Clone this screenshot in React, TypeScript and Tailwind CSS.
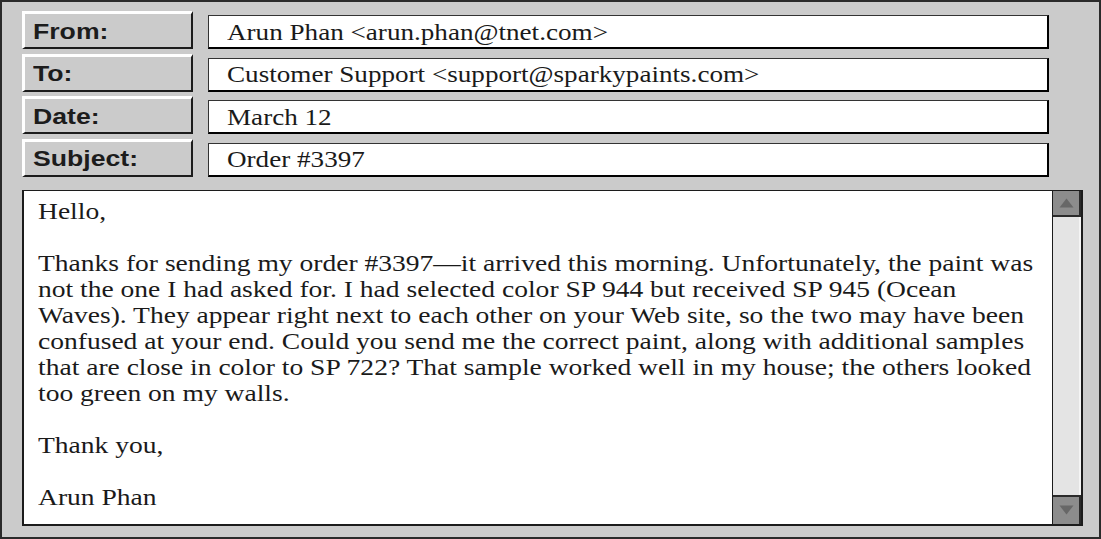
import React from "react";

const rows = [
  { label: "From:", value: "Arun Phan <arun.phan@tnet.com>" },
  { label: "To:", value: "Customer Support <support@sparkypaints.com>" },
  { label: "Date:", value: "March 12" },
  { label: "Subject:", value: "Order #3397" },
];

const body: string[] = [
  "Hello,",
  "",
  "Thanks for sending my order #3397\u2014it arrived this morning. Unfortunately, the paint was",
  "not the one I had asked for. I had selected color SP 944 but received SP 945 (Ocean",
  "Waves). They appear right next to each other on your Web site, so the two may have been",
  "confused at your end. Could you send me the correct paint, along with additional samples",
  "that are close in color to SP 722? That sample worked well in my house; the others looked",
  "too green on my walls.",
  "",
  "Thank you,",
  "",
  "Arun Phan",
];

export default function App() {
  return (
    <div className="w-[1101px] h-[539px] bg-[#cbcbcb] border-2 border-[#2a2a2a] box-border flex flex-col pl-[20px] pr-[15px] pt-[9px]">
      <div className="flex flex-col gap-[4.5px]">
        {rows.map((r) => (
          <div key={r.label} className="flex items-end h-[38px]">
            <div
              className="w-[171px] h-[38px] box-border border-t-[3px] border-l-[3px] border-b-2 border-r-2 border-t-white border-l-white border-b-[#1c1c1c] border-r-[#1c1c1c] bg-[#cbcbcb] flex items-center pl-[8px] text-[22px] font-bold text-[#1c1c1c]"
              style={{ fontFamily: '"Liberation Sans", Arial, sans-serif' }}
            >
              <span className="inline-block origin-left scale-x-[1.21] pt-[1px]">{r.label}</span>
            </div>
            <div
              className="ml-[15px] w-[841px] h-[34px] box-border border-t border-l border-t-[#333] border-l-[#333] border-b-2 border-r-2 border-b-black border-r-black bg-white flex items-center pl-[18px] text-[24px] leading-[28px] text-[#1a1a1a] whitespace-nowrap"
              style={{ fontFamily: '"Liberation Serif", "Times New Roman", serif' }}
            >
              <span className="inline-block origin-left scale-x-[1.13]">{r.value}</span>
            </div>
          </div>
        ))}
      </div>
      <div className="mt-[13px] flex w-[1061px] h-[336px] box-border border-2 border-t border-[#1c1c1c] bg-white">
        <div
          className="flex-1 pl-[14px] pt-[7px] text-[24px] leading-[26px] text-[#1a1a1a]"
          style={{ fontFamily: '"Liberation Serif", "Times New Roman", serif' }}
        >
          {body.map((l, i) => (
            <div key={i} className="h-[26px] whitespace-nowrap">
              <span className="inline-block origin-left scale-x-[1.147]">{l}</span>
            </div>
          ))}
        </div>
        <div className="w-[29px] flex flex-col border-l border-[#1c1c1c] bg-[#e4e4e4]">
          <div className="h-[26px] bg-[#8c8c8c] border-2 border-l-0 border-t-0 border-[#2a2a2a] flex items-center justify-center">
            <svg width="15" height="10" viewBox="0 0 15 10">
              <polygon points="7.5,0.5 14.5,9.5 0.5,9.5" fill="#676767" />
            </svg>
          </div>
          <div className="flex-1 border-r-2 border-r-[#f4f4f4]" />
          <div className="h-[29px] bg-[#8c8c8c] border-2 border-l-0 border-b-0 border-[#2a2a2a] flex items-center justify-center">
            <svg width="15" height="10" viewBox="0 0 15 10">
              <polygon points="0.5,0.5 14.5,0.5 7.5,9.5" fill="#676767" />
            </svg>
          </div>
        </div>
      </div>
    </div>
  );
}
